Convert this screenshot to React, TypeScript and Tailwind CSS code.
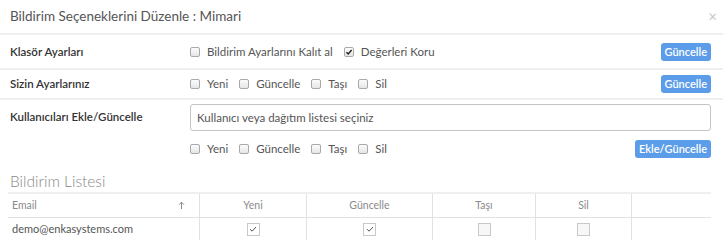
import React from "react";

const font = { fontFamily: "Lato, 'Open Sans', sans-serif" };

function Box({ checked = false }: { checked?: boolean }) {
  return (
    <span className="inline-flex h-[10px] w-[10px] shrink-0 items-center justify-center rounded-[2px] border border-[#a9a9a9] bg-gradient-to-b from-[#fcfcfc] to-[#e6e6e6]">
      {checked && (
        <svg viewBox="0 0 10 10" className="h-[8px] w-[8px]">
          <path d="M1.8 5.2 L4 7.4 L8.3 2.4" fill="none" stroke="#222" strokeWidth="1.8" />
        </svg>
      )}
    </span>
  );
}

function Option({ label, checked }: { label: string; checked?: boolean }) {
  return (
    <label className="mr-[11px] inline-flex items-center gap-[7px] text-[11.5px] text-[#555]">
      <Box checked={checked} />
      {label}
    </label>
  );
}

function Btn({ children }: { children: React.ReactNode }) {
  return (
    <button className="rounded-[3px] bg-[#5b9de9] px-[4px] py-[2px] text-[11px] leading-[14px] font-semibold text-white">
      {children}
    </button>
  );
}

function CellBox({ checked = false }: { checked?: boolean }) {
  return (
    <span
      className={`inline-flex h-[13px] w-[13px] items-center justify-center border border-[#c8c8c8] ${
        checked ? "bg-white" : "bg-[#f7f7f7]"
      }`}
    >
      {checked && (
        <svg viewBox="0 0 12 12" className="h-[10px] w-[10px]">
          <path d="M2.5 6.3 L5 8.6 L9.6 3.6" fill="none" stroke="#555" strokeWidth="1.2" />
        </svg>
      )}
    </span>
  );
}

const basic = ["Yeni", "Güncelle", "Taşı", "Sil"];
const cols = "grid grid-cols-[192px_107px_126px_103px_96px_79px]";

export default function App() {
  return (
    <div className="h-[249px] w-[723px] overflow-hidden bg-white" style={font}>
      {/* header */}
      <div className="flex h-[35px] items-center justify-between border-b-2 border-[#efefef] pl-[10px] pr-[6px]">
        <h4 className="text-[13.5px] text-[#555]">Bildirim Seçeneklerini Düzenle : Mimari</h4>
        <span className="text-[15px] leading-none text-[#c8c8c8]">×</span>
      </div>

      {/* Klasör */}
      <div className="flex h-[35px] items-center border-b-2 border-[#efefef] pl-[10px] pr-[12px]">
        <div className="w-[180px] text-[11.5px] font-semibold text-[#333]">Klasör Ayarları</div>
        <div className="flex flex-1 items-center">
          <Option label="Bildirim Ayarlarını Kalıt al" />
          <Option label="Değerleri Koru" checked />
        </div>
        <Btn>Güncelle</Btn>
      </div>

      {/* Sizin */}
      <div className="flex h-[30px] items-center border-b-2 border-[#efefef] pl-[10px] pr-[12px]">
        <div className="w-[180px] text-[11.5px] font-semibold text-[#333]">Sizin Ayarlarınız</div>
        <div className="flex flex-1 items-center">
          {basic.map((b) => (
            <Option key={b} label={b} />
          ))}
        </div>
        <Btn>Güncelle</Btn>
      </div>

      {/* Kullanıcılar */}
      <div className="flex pl-[10px] pr-[12px] pt-[4px]">
        <div className="w-[180px] pt-[4px] text-[11.5px] font-semibold text-[#333]">Kullanıcıları Ekle/Güncelle</div>
        <div className="flex flex-1 flex-col">
          <div className="flex h-[27px] items-center rounded-[3px] border border-[#c4c4c4] px-[6px] text-[11.5px] text-[#555]">
            Kullanıcı veya dağıtım listesi seçiniz
          </div>
          <div className="mt-[9px] flex items-center">
            <div className="flex flex-1 items-center">
              {basic.map((b) => (
                <Option key={b} label={b} />
              ))}
            </div>
            <Btn>Ekle/Güncelle</Btn>
          </div>
        </div>
      </div>

      {/* list */}
      <div className="pl-[8px] pr-[12px]">
        <div className="mt-[14px] pl-[2px] text-[15.5px] leading-[19px] font-light text-[#888]">Bildirim Listesi</div>
        <div className="mt-[1px] border-t-2 border-[#efefef]">
          <div className={`${cols} border-b border-[#e2e2e2] text-[10.5px] text-[#8a8a8a]`}>
            <div className="flex h-[23px] items-center justify-between border-r border-[#e2e2e2] pl-[4px] pr-[14px]">
              <span>Email</span>
              <svg viewBox="0 0 8 10" className="h-[9px] w-[7px]">
                <path d="M4 9 V1.5 M1.3 4 L4 1.2 L6.7 4" fill="none" stroke="#777" strokeWidth="1" />
              </svg>
            </div>
            {basic.map((h) => (
              <div key={h} className="flex h-[23px] items-center justify-center border-r border-[#e2e2e2]">
                {h}
              </div>
            ))}
            <div />
          </div>
          <div className={`${cols} text-[11px] text-[#555]`}>
            <div className="flex h-[22px] items-center border-r border-[#e2e2e2] pl-[4px]">demo@enkasystems.com</div>
            <div className="flex items-center justify-center border-r border-[#e2e2e2]"><CellBox checked /></div>
            <div className="flex items-center justify-center border-r border-[#e2e2e2]"><CellBox checked /></div>
            <div className="flex items-center justify-center border-r border-[#e2e2e2]"><CellBox /></div>
            <div className="flex items-center justify-center border-r border-[#e2e2e2]"><CellBox /></div>
            <div />
          </div>
        </div>
      </div>
    </div>
  );
}
